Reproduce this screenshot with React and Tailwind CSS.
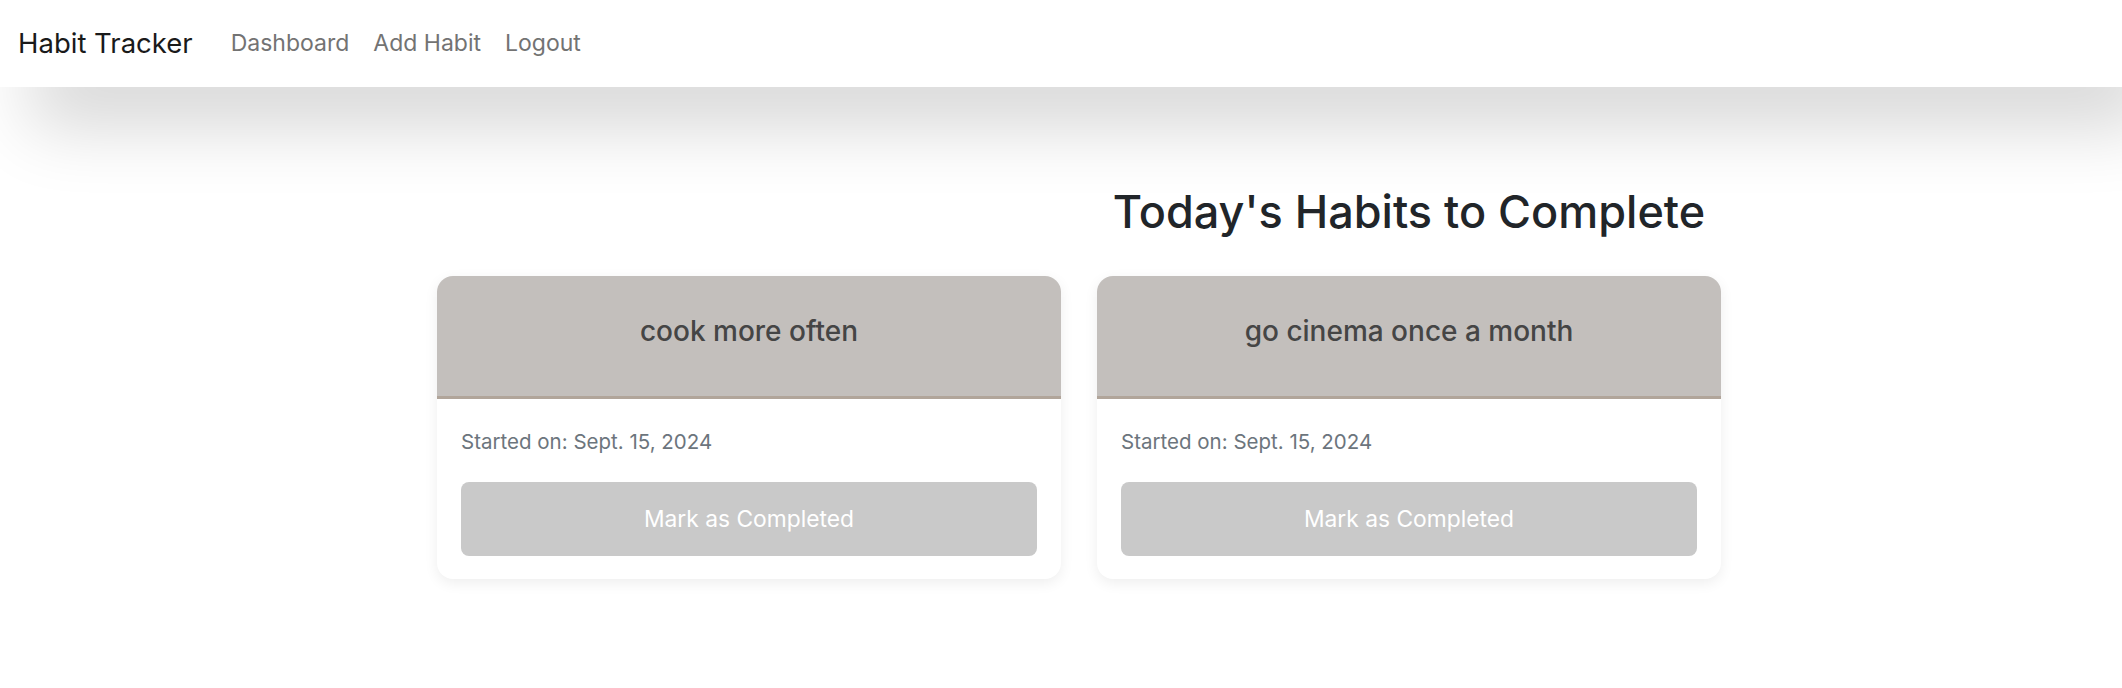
const habits = [
  { id: 1, title: 'cook more often', started: 'Sept. 15, 2024' },
  { id: 2, title: 'go cinema once a month', started: 'Sept. 15, 2024' },
];

function Navbar() {
  return (
    <nav className="relative z-10 flex h-[87px] items-center bg-white pl-[18px] shadow-[30px_40px_70px_rgba(0,0,0,0.16)]">
      <a href="#" className="mr-[38px] text-[27.5px] text-[#1a1a1a]">Habit Tracker</a>
      <div className="flex gap-[24px] text-[23px] text-[#737373]">
        <a href="#">Dashboard</a>
        <a href="#">Add Habit</a>
        <a href="#">Logout</a>
      </div>
    </nav>
  );
}

function HabitCard({ habit }) {
  return (
    <div className="overflow-hidden rounded-2xl bg-white shadow-[0_4px_14px_rgba(0,0,0,0.07)]">
      <div className="flex h-[123px] items-center justify-center border-b-[3px] border-[#b1a59a] bg-[#c3bfbc] pb-[10px]">
        <h5 className="text-[28px] font-medium leading-[34px] text-[#454545]">{habit.title}</h5>
      </div>
      <div className="px-6 pb-[23px] pt-[30px]">
        <p className="text-[20.5px] leading-[26px] text-[#6c757d]">Started on: {habit.started}</p>
        <button
          type="button"
          className="mt-[27px] flex h-[74px] w-full items-center justify-center rounded-lg bg-[#c9c9c9] text-[22.8px] text-white"
        >
          Mark as Completed
        </button>
      </div>
    </div>
  );
}

export default function App() {
  return (
    <div className="min-h-[688px] bg-white font-['Inter',sans-serif]">
      <Navbar />
      <main className="ml-[437px] grid w-[1284px] grid-cols-2 gap-x-9 pt-[97px]">
        <div />
        <h2 className="text-center text-[45px] font-medium leading-[56px] text-[#212529]">Today's Habits to Complete</h2>
        <div className="col-span-2 mt-9 grid grid-cols-2 gap-x-9">
          {habits.map((habit) => (
            <HabitCard key={habit.id} habit={habit} />
          ))}
        </div>
      </main>
    </div>
  );
}
